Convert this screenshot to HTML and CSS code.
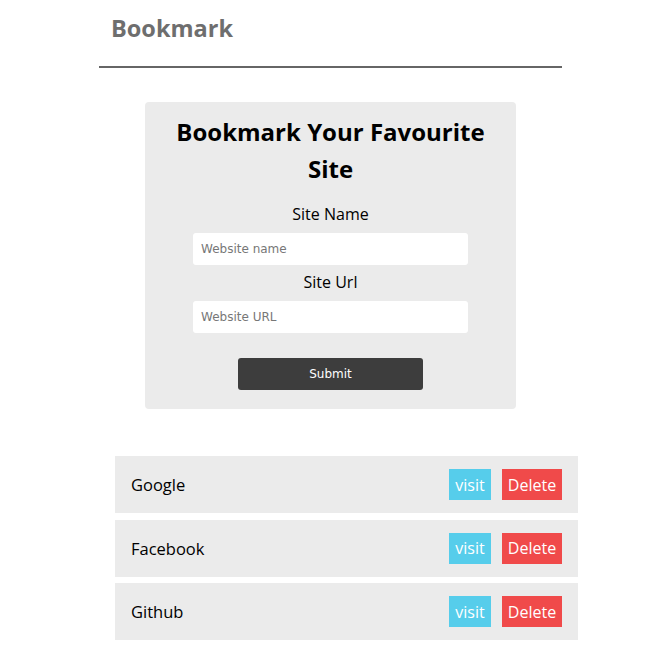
FILE: index.html
```html
<!DOCTYPE html>
<html>
<head>
<meta charset="utf-8">
<link rel="stylesheet" href="styles.css">
</head>
<body>
<div class="container">
  <header class="header">
    <h1 class="brand">Bookmark</h1>
  </header>
  <form class="card">
    <h2 class="card-title">Bookmark Your Favourite Site</h2>
    <label class="field-label">Site Name</label>
    <input class="field" type="text" placeholder="Website name">
    <label class="field-label second">Site Url</label>
    <input class="field" type="text" placeholder="Website URL">
    <button class="submit" type="button">Submit</button>
  </form>
  <ul class="list">
    <li class="row"><span class="name">Google</span><span class="actions"><a class="btn visit">visit</a><a class="btn delete">Delete</a></span></li>
    <li class="row"><span class="name">Facebook</span><span class="actions"><a class="btn visit">visit</a><a class="btn delete">Delete</a></span></li>
    <li class="row"><span class="name">Github</span><span class="actions"><a class="btn visit">visit</a><a class="btn delete">Delete</a></span></li>
  </ul>
</div>
</body>
</html>
```
FILE: styles.css
```css
* { box-sizing: border-box; }
body {
  margin: 0;
  font-family: "Open Sans", "DejaVu Sans", sans-serif;
  color: #000;
  background: #fff;
}
.container {
  width: 463px;
  margin: 0 auto;
}
.header {
  height: 68px;
  border-bottom: 2px solid #666;
  padding: 11px 0 0 12px;
}
.brand {
  margin: 0;
  font-size: 23.5px;
  line-height: 34px;
  font-weight: 700;
  color: #6e6e6e;
}
.card {
  width: 371px;
  margin: 34px auto 0;
  background: #ebebeb;
  border-radius: 4px;
  padding: 11px 0 19px;
  display: flex;
  flex-direction: column;
  align-items: center;
}
.card-title {
  margin: 0;
  width: 330px;
  text-align: center;
  font-size: 24px;
  line-height: 37px;
  font-weight: 700;
}
.field-label {
  display: block;
  margin-top: 16px;
  font-size: 16px;
  line-height: 22px;
}
.field-label.second { margin-top: 6px; }
.field {
  margin-top: 8px;
  width: 275px;
  height: 32px;
  border: none;
  border-radius: 3px;
  background: #fff;
  padding: 0 8px;
  font-family: "DejaVu Sans", sans-serif;
  font-size: 12px;
}
.field::placeholder { color: #777; }
.submit {
  margin-top: 25px;
  width: 185px;
  height: 32px;
  border: none;
  border-radius: 3px;
  background: #3d3d3d;
  color: #fff;
  font-family: "DejaVu Sans", sans-serif;
  font-size: 12px;
}
.list {
  list-style: none;
  width: 463px;
  margin: 47px 0 0 16px;
  padding: 0;
  display: flex;
  flex-direction: column;
  gap: 6.5px;
}
.row {
  height: 57px;
  background: #ebebeb;
  display: flex;
  align-items: center;
  justify-content: space-between;
  padding: 0 16px;
  font-size: 16.5px;
}
.actions {
  display: flex;
  gap: 11px;
}
.btn {
  display: flex;
  align-items: center;
  justify-content: center;
  height: 31px;
  color: #fff;
  font-size: 16px;
}
.visit { width: 42px; background: #56cdeb; }
.delete { width: 60px; background: #f04a4a; }
```
